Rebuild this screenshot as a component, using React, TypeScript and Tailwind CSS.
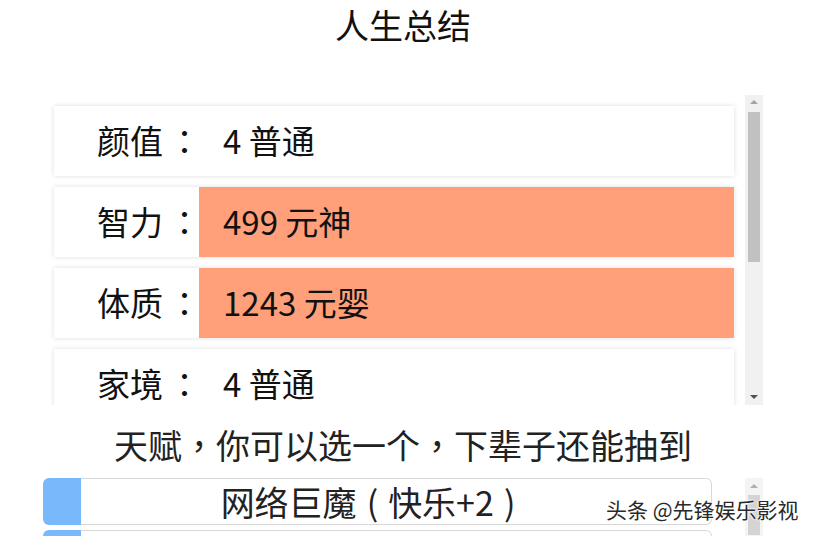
import React from "react";

const font = { fontFamily: '"Noto Sans CJK SC", "Noto Sans", sans-serif' };

function P({ children }: { children: React.ReactNode }) {
  return <span style={{ fontFamily: '"Noto Sans CJK TC", sans-serif' }}>{children}</span>;
}

function Scrollbar({ height, thumbTop, thumbHeight }: { height: number; thumbTop: number; thumbHeight: number }) {
  return (
    <div className="w-[18px] bg-[#f1f1f1] relative shrink-0" style={{ height }}>
      <div className="absolute left-[5px] top-[5px] w-0 h-0 border-l-[4px] border-r-[4px] border-b-[4px] border-l-transparent border-r-transparent border-b-[#a3a3a3]" />
      <div className="absolute left-[3px] w-[12px] bg-[#c1c1c1]" style={{ top: thumbTop, height: thumbHeight }} />
      <div className="absolute left-[5px] bottom-[6px] w-0 h-0 border-l-[4px] border-r-[4px] border-t-[4px] border-l-transparent border-r-transparent border-t-[#505050]" />
    </div>
  );
}

const rows = [
  { label: "颜值", value: "4 普通", hi: false },
  { label: "智力", value: "499 元神", hi: true },
  { label: "体质", value: "1243 元婴", hi: true },
  { label: "家境", value: "4 普通", hi: false },
];

export default function App() {
  return (
    <div className="w-[813px] h-[536px] relative overflow-hidden bg-white text-[#111]" style={font}>
      <div className="w-[806px] text-center text-[34px] leading-[40px] pt-[5px] h-[95px]">人生总结</div>

      <div className="ml-[43px] flex">
        <div className="w-[702px] h-[310px] overflow-hidden pt-[11px] pl-[11px] pr-[11px] flex flex-col gap-[11px]">
          {rows.map((r) => (
            <div key={r.label} className="h-[70px] shrink-0 flex bg-white shadow-[0_0_5px_rgba(0,0,0,0.13)]">
              <div className="w-[145px] pl-[43px] flex items-center text-[33px] whitespace-nowrap">
                {r.label}
                <span className="ml-[5px]">
                  <P>：</P>
                </span>
              </div>
              <div className={`flex-1 flex items-center pl-[24px] text-[33px] whitespace-nowrap ${r.hi ? "bg-[#ffa07a]" : ""}`}>{r.value}</div>
            </div>
          ))}
        </div>
        <Scrollbar height={310} thumbTop={17} thumbHeight={150} />
      </div>

      <div className="w-[806px] text-center text-[34px] leading-[40px] mt-[20px] mb-[13px] text-[#222] whitespace-nowrap">
        天赋<P>，</P>你可以选一个<P>，</P>下辈子还能抽到
      </div>

      <div className="ml-[43px] flex">
        <div className="w-[702px] flex flex-col gap-[5px]">
          <div className="flex w-[669px] h-[47px] shrink-0">
            <div className="w-[38px] bg-[#78b8fb] rounded-l-[6px]" />
            <div className="flex-1 border border-l-0 border-[#d8d8d8] rounded-r-[6px] flex items-center justify-center pr-[46px] text-[34px] text-[#222] whitespace-nowrap">
              网络巨魔<span className="px-[10px]">(</span>快乐+2<span className="px-[10px]">)</span>
            </div>
          </div>
          <div className="flex w-[669px] h-[47px] shrink-0">
            <div className="w-[38px] bg-[#78b8fb] rounded-l-[6px]" />
            <div className="flex-1 border border-l-0 border-[#d8d8d8] rounded-r-[6px]" />
          </div>
        </div>
        <div className="w-[18px] h-[60px] bg-[#f4f4f4] relative">
          <div className="absolute left-[5px] top-[6px] w-0 h-0 border-l-[4px] border-r-[4px] border-b-[4px] border-l-transparent border-r-transparent border-b-[#b0b0b0]" />
          <div className="absolute left-[3px] top-[17px] w-[12px] h-[40px] bg-[#d4d4d4]" />
        </div>
      </div>

      <div
        className="absolute left-[606px] top-[495px] text-[21px] leading-[28px] text-[#2a2a2a] whitespace-nowrap"
        style={{ textShadow: "0 0 2px #fff, 0 0 2px #fff, 0 0 3px #fff" }}
      >
        头条 @先锋娱乐影视
      </div>
    </div>
  );
}
